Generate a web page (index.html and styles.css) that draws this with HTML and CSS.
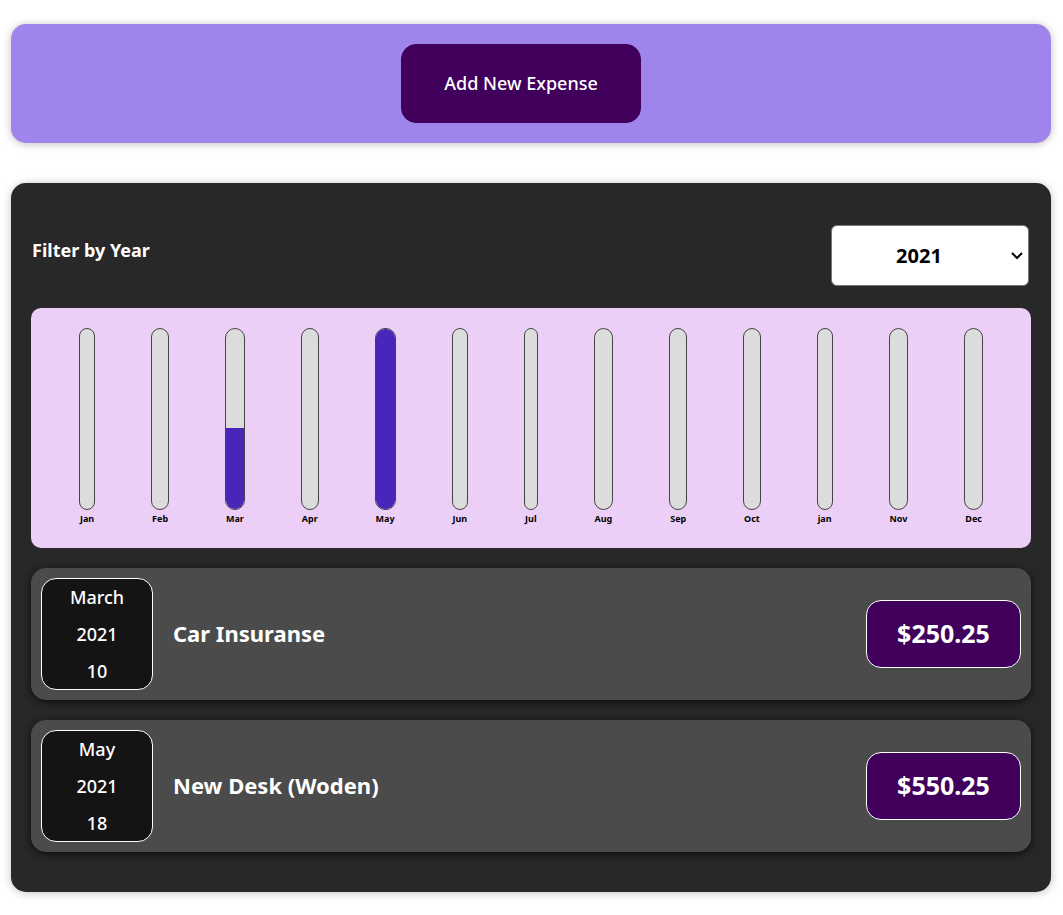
FILE: index.html
```html
<!DOCTYPE html>
<html lang="en">
<head>
<meta charset="utf-8">
<meta name="viewport" content="width=device-width, initial-scale=1">
<title>Expenses</title>
<link rel="stylesheet" href="styles.css">
</head>
<body>
<main class="page">
  <section class="new-expense">
    <button type="button" class="add-button">Add New Expense</button>
  </section>
  <section class="expenses">
    <div class="filter">
      <label class="filter-label" for="year">Filter by Year</label>
      <div class="filter-control">
        <select class="filter-select" id="year">
          <option>2022</option>
          <option selected>2021</option>
          <option>2020</option>
          <option>2019</option>
        </select>
        <svg class="chevron" viewBox="0 0 12 8" aria-hidden="true"><path d="M1 1l5 5 5-5" fill="none" stroke="#000" stroke-width="2"/></svg>
      </div>
    </div>
    <div class="chart">
      <div class="month"><div class="bar"></div><span>Jan</span></div>
      <div class="month"><div class="bar"></div><span>Feb</span></div>
      <div class="month"><div class="bar"><div class="fill" style="height:45%"></div></div><span>Mar</span></div>
      <div class="month"><div class="bar"></div><span>Apr</span></div>
      <div class="month"><div class="bar"><div class="fill" style="height:100%"></div></div><span>May</span></div>
      <div class="month"><div class="bar"></div><span>Jun</span></div>
      <div class="month"><div class="bar"></div><span>Jul</span></div>
      <div class="month"><div class="bar"></div><span>Aug</span></div>
      <div class="month"><div class="bar"></div><span>Sep</span></div>
      <div class="month"><div class="bar"></div><span>Oct</span></div>
      <div class="month"><div class="bar"></div><span>jan</span></div>
      <div class="month"><div class="bar"></div><span>Nov</span></div>
      <div class="month"><div class="bar"></div><span>Dec</span></div>
    </div>
    <ul class="list">
      <li class="item">
        <div class="date"><span>March</span><span>2021</span><span>10</span></div>
        <h2 class="title">Car Insuranse</h2>
        <div class="price">$250.25</div>
      </li>
      <li class="item">
        <div class="date"><span>May</span><span>2021</span><span>18</span></div>
        <h2 class="title">New Desk (Woden)</h2>
        <div class="price">$550.25</div>
      </li>
    </ul>
  </section>
</main>
</body>
</html>
```
FILE: styles.css
```css
* { box-sizing: border-box; }

body {
  margin: 0;
  background: #fff;
  color: #fff;
  font-family: "Noto Sans", "Open Sans", sans-serif;
}

.page {
  display: flex;
  flex-direction: column;
  gap: 40px;
  padding: 24px 12px 23px 11px;
}

.new-expense {
  display: flex;
  justify-content: center;
  padding: 20px 30px 20px 10px;
  border-radius: 15px;
  background: #9f85eb;
  box-shadow: 0 1px 8px rgba(0, 0, 0, 0.25);
}

.add-button {
  padding: 20px 42px;
  border: 1px solid #40005c;
  border-radius: 15px;
  background: #40005c;
  color: #fff;
  font: 500 18px/37px "Noto Sans", sans-serif;
  cursor: pointer;
}

.expenses {
  padding: 42px 20px 40px;
  border-radius: 15px;
  background: #282828;
  box-shadow: 0 1px 8px rgba(0, 0, 0, 0.25);
}

.filter {
  display: flex;
  justify-content: space-between;
  align-items: flex-start;
  padding: 0 2px 0 1px;
  margin-bottom: 22px;
}

.filter-label {
  font-size: 18px;
  font-weight: 700;
  line-height: 50px;
}

.filter-control {
  position: relative;
  display: flex;
}

.filter-select {
  width: 198px;
  height: 61px;
  padding: 0 22px 0 0;
  appearance: none;
  border: 1px solid #767676;
  border-radius: 6px;
  background: #fff;
  color: #000;
  font: 700 20px "Noto Sans", sans-serif;
  text-align: center;
  text-align-last: center;
}

.chevron {
  position: absolute;
  top: 27px;
  right: 6px;
  width: 12px;
  height: 8px;
  pointer-events: none;
}

.chart {
  display: flex;
  justify-content: space-around;
  padding: 20px;
  border-radius: 10px;
  background: #eccff6;
}

.month {
  display: flex;
  flex-direction: column;
  height: 200px;
  color: #000;
  font-size: 9px;
  font-weight: 700;
  line-height: 18px;
  text-align: center;
}

.month span { padding: 0 1px; }

.bar {
  display: flex;
  flex-direction: column;
  justify-content: flex-end;
  height: 182px;
  border: 1px solid #444;
  border-radius: 10px;
  background: #dcdcdc;
  overflow: hidden;
}

.fill { background: #4826b9; }

.list {
  display: flex;
  flex-direction: column;
  gap: 20px;
  margin: 20px 0 0;
  padding: 0;
  list-style: none;
}

.item {
  display: flex;
  align-items: center;
  gap: 20px;
  padding: 10px;
  border-radius: 15px;
  background: #4b4b4b;
  box-shadow: 0 2px 8px rgba(0, 0, 0, 0.7);
}

.date {
  display: flex;
  flex-direction: column;
  width: 112px;
  border: 1px solid #fff;
  border-radius: 15px;
  background: #141414;
  font-size: 18px;
  font-weight: 500;
  line-height: 37px;
  text-align: center;
}

.date span:last-child { height: 36px; }

.title {
  flex: 1;
  margin: 0;
  font-size: 22px;
  line-height: 38px;
  padding-bottom: 2px;
}

.price {
  min-width: 155px;
  padding: 13px 20px 15px;
  border: 1px solid #fff;
  border-radius: 15px;
  background: #40005c;
  font-size: 25px;
  font-weight: 700;
  line-height: 38px;
  text-align: center;
}
```
